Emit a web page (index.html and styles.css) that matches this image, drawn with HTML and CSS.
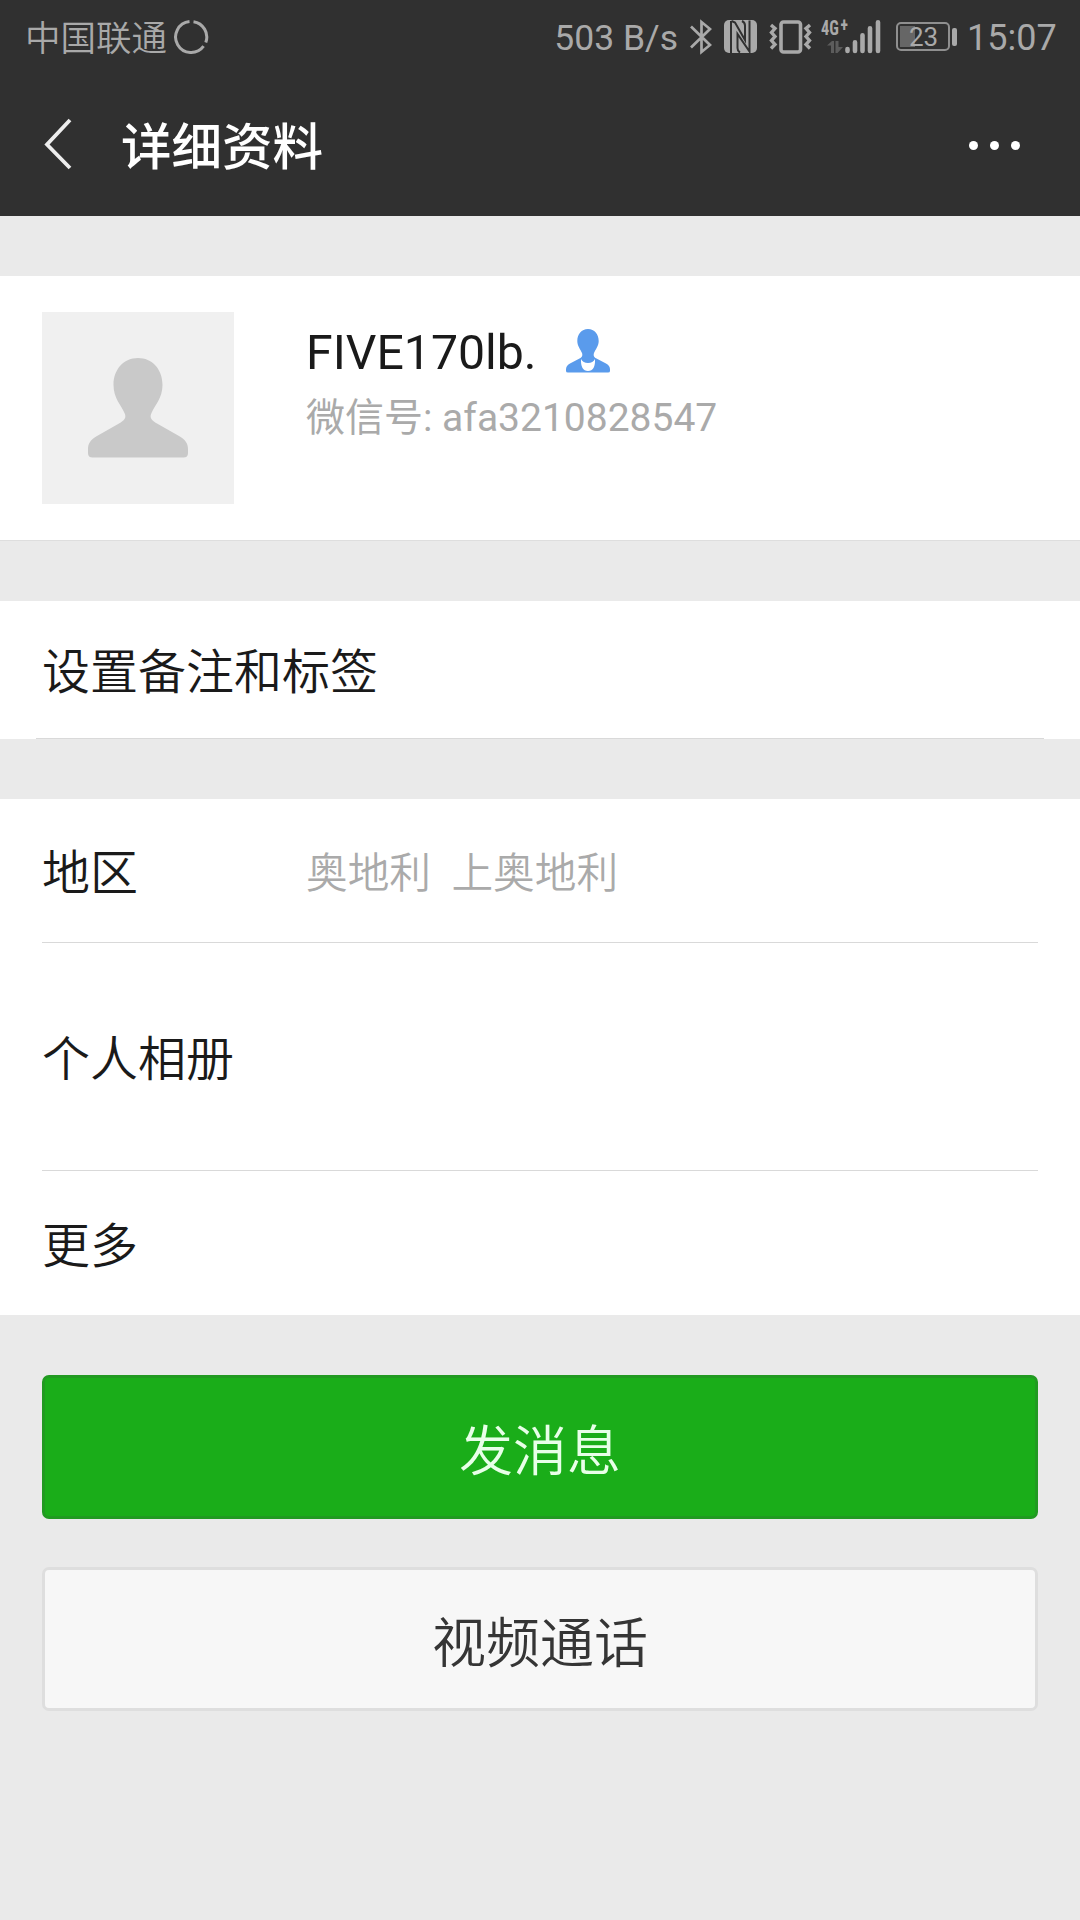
FILE: index.html
```html
<!DOCTYPE html>
<html lang="zh-CN">
<head>
    <meta charset="UTF-8">
    <meta name="viewport" content="width=device-width, initial-scale=1.0">
    <title>详细资料</title>
    <link rel="stylesheet" href="styles.css">
</head>
<body>
    <header class="header">
        <div class="status-bar">
            <span class="carrier">中国联通</span>
            <svg class="icon-ring" width="36" height="36" viewBox="0 0 36 36">
                <g fill="none" stroke="#a9a9a9" stroke-width="3">
                    <path d="M20.5 2.7A15.5 15.5 0 0 1 32.8 23.4"/>
                    <path d="M30.6 27.2A15.5 15.5 0 1 1 16.5 2.6"/>
                </g>
            </svg>

            <span class="speed">503 B/s</span>
            <svg class="icon-bluetooth" width="22" height="36" viewBox="0 0 22 36">
                <path d="M1 7.5L20 26L11.500 33V3L20 10L1 28.5" fill="none" stroke="#a9a9a9" stroke-width="2.7"/>
            </svg>
            <svg class="icon-nfc" width="33" height="33" viewBox="0 0 33 33">
                <rect width="33" height="33" rx="5" fill="#a9a9a9"/>
                <path d="M7 1V33M7.500 1L11 2.500L21 20V5.500Q21 2.500 18 1M25.500 0.500V31.500L13.500 14V28Q13.500 31 16 32.500" fill="none" stroke="#303030" stroke-width="2"/>
            </svg>
            <svg class="icon-vibrate" width="43" height="34" viewBox="0 0 43 34">
                <g fill="none" stroke="#a9a9a9">
                    <rect x="12" y="2" width="19.5" height="30" rx="2.5" stroke-width="3.6"/>
                    <path d="M2 5L6 8.5L2.5 12.5L6 16.5L2.5 20.5L6 24.5L2 28.5M41 5L37 8.5L40.5 12.5L37 16.5L40.5 20.5L37 24.5L41 28.5" stroke-width="3.4"/>
                </g>
            </svg>
            <div class="signal">
                <span class="network">4G<sup>+</sup></span>
                <svg width="60" height="36" viewBox="0 0 60 36">
                    <path d="M6 26.500L11 22H13V34H10V26.500ZM14.500 22H17.500V28H22L16.500 34H14.500Z" fill="#5c5c5c"/>
                    <path d="M26.5 30V32M34 23.3V32M41.5 16.3V32M49 9.300V32M57 3.300V32" stroke="#a9a9a9" stroke-width="4.6" stroke-linecap="round"/>
                </svg>
            </div>
            <div class="battery"><span class="level">23</span></div>
            <span class="battery-cap"></span>
            <span class="time">15:07</span>
        </div>

        <div class="title-bar">
            <svg class="icon-back" width="28" height="52" viewBox="0 0 28 52">
                <path d="M26 2L3 26.5L26 50" fill="none" stroke="#ededed" stroke-width="3.8"/>
            </svg>
            <h1>详细资料</h1>
            <div class="more"><i></i><i></i><i></i></div>
        </div>
    </header>

    <section class="card profile">
        <div class="avatar">
            <svg width="100" height="100" viewBox="0 0 100 100">
                <path d="M50 0C64 0 74.500 11 74.500 27C74.500 40 67 47 63.500 55C61 60 64 62.500 69 65.500L91 78C98 82 100 86 100 91V95Q100 99.500 95.500 99.500H4.500Q0 99.500 0 95V91C0 86 2 82 9 78L31 65.500C36 62.500 39 60 36.500 55C33 47 25.500 40 25.500 27C25.500 11 36 0 50 0Z" fill="#c9c9c9"/>
            </svg>
        </div>
        <div class="info">
            <div class="name">
                <span>FIVE170lb.</span>
                <svg width="44" height="44" viewBox="0 0 44 44">
                    <path d="M22 0C28.500 0 32.700 5 32.700 12C32.700 17 29.500 20.500 28 24C27 27 28.500 28.500 30 29.300L40 34.500C43 36 44 38 44 40.500V42Q44 43.500 42 43.500H2Q0 43.500 0 42V40.500C0 38 1 36 4 34.500L14 29.300C15.500 28.500 17 27 16 24C14.500 20.500 11.300 17 11.300 12C11.300 5 15.500 0 22 0Z" fill="#5a9bec"/>
                    <path d="M15 30Q17 34 22 34Q27 34 29 30Q29.500 42 22 42Q14.500 42 15 30Z" fill="#fff"/>
                </svg>
            </div>
            <div class="wechat-id">微信号: afa3210828547</div>
        </div>
    </section>

    <section class="card">
        <div class="row row-remark">设置备注和标签</div>
    </section>

    <section class="card">
        <div class="row row-region">
            <span class="label">地区</span>
            <span class="value">奥地利&nbsp; 上奥地利</span>
        </div>
        <div class="row row-album">个人相册</div>
        <div class="row row-more">更多</div>
    </section>

    <div class="actions">
        <button class="btn btn-primary">发消息</button>
        <button class="btn btn-default">视频通话</button>
    </div>
</body>
</html>
```
FILE: styles.css
```css
* {
    box-sizing: border-box;
}

body {
    margin: 0;
    min-height: 1920px;
    background: #eaeaea;
    color: #1a1a1a;
    font-family: Roboto, "Noto Sans CJK SC", sans-serif;
}

svg {
    display: block;
    flex: none;
}

/* header */
.header {
    height: 216px;
    background: #303030;
}

.status-bar {
    display: flex;
    align-items: center;
    height: 72px;
    padding: 1px 23px 0 25px;
    color: #a9a9a9;
    font-size: 36px;
    line-height: 42px;
    white-space: nowrap;
}

.carrier {
    width: 144px;
    margin-top: 4px;
    font-size: 35.5px;
    font-weight: 350;
}

.icon-ring {
    margin-left: 4px;
}

.speed {
    margin-left: auto;
    margin-top: 3px;
    font-size: 35.5px;
}

.icon-bluetooth {
    margin-left: 12px;
}

.icon-nfc {
    margin-left: 12px;
}

.icon-vibrate {
    margin-left: 12px;
}

.signal {
    position: relative;
    margin-left: 9px;
}

.network {
    position: absolute;
    left: 0;
    top: 0;
    font-family: "Roboto Condensed", Roboto, sans-serif;
    font-size: 21px;
    font-weight: 700;
    line-height: 18px;
    transform: scaleX(0.78);
    transform-origin: left;
}

.network sup {
    margin-left: 2px;
    font-size: 20px;
    line-height: 0;
    vertical-align: 3px;
}

.battery {
    width: 54px;
    height: 29px;
    margin-left: 15px;
    padding-left: 11px;
    border: 2px solid #8f8f8f;
    border-radius: 5px;
    background: linear-gradient(#666, #666) 2px 2px / 15px 21px no-repeat;
}

.level {
    display: block;
    font-size: 26px;
    line-height: 26px;
}

.battery-cap {
    width: 5px;
    height: 18px;
    margin-left: 2px;
    border-radius: 2px;
    background: #a9a9a9;
}

.time {
    width: 90px;
    margin-left: 10px;
    margin-top: 3px;
}

.title-bar {
    display: flex;
    align-items: center;
    height: 144px;
    padding: 0 60px 0 44px;
}

.title-bar h1 {
    margin: 7px 0 0 49px;
    color: #fff;
    font-size: 50.5px;
    font-weight: 500;
    line-height: 72px;
}

.more {
    display: flex;
    gap: 12px;
    margin-left: auto;
    margin-top: 3px;
}

.more i {
    width: 9px;
    height: 9px;
    border-radius: 50%;
    background: #fff;
}

/* cards */
.card {
    margin-top: 60px;
    background: #fff;
}

.profile {
    display: flex;
    height: 265px;
    padding: 36px 42px;
    border-bottom: 1px solid #dedede;
}

.avatar {
    display: flex;
    align-items: center;
    justify-content: center;
    width: 192px;
    height: 192px;
    background: #f0f0f0;
}

.info {
    margin-left: 72px;
    padding-top: 13px;
}

.name {
    display: flex;
    align-items: center;
    gap: 29px;
    font-size: 48.2px;
    line-height: 56px;
}

.name svg {
    margin-bottom: 5px;
}

.wechat-id {
    margin-top: 9px;
    color: #aaa;
    font-size: 39px;
    line-height: 56px;
    white-space: nowrap;
}

.row {
    display: flex;
    align-items: center;
    margin: 0 42px;
    padding-top: 7px;
    font-size: 48px;
    font-weight: 350;
    line-height: 72px;
}

.row-remark {
    height: 138px;
    margin: 0 36px;
    padding-left: 6px;
    border-bottom: 1px solid #d9d9d9;
}

.row-region {
    height: 144px;
    border-bottom: 1px solid #d9d9d9;
}

.row-album {
    height: 228px;
    border-bottom: 1px solid #d9d9d9;
}

.row-more {
    height: 144px;
}

.label {
    width: 264px;
}

.value {
    color: #aaa;
    font-size: 41.7px;
}

/* buttons */
.actions {
    display: flex;
    flex-direction: column;
    gap: 48px;
    padding: 60px 42px;
}

.btn {
    height: 144px;
    padding: 0;
    border-radius: 7px;
    font-family: inherit;
    font-size: 54px;
    font-weight: 350;
}

.btn-primary {
    border: 3px solid #219a21;
    background: #1aad19;
    color: #e8ffe8;
}

.btn-default {
    border: 3px solid #dedede;
    background: #f7f7f7;
    color: #353535;
}
```
